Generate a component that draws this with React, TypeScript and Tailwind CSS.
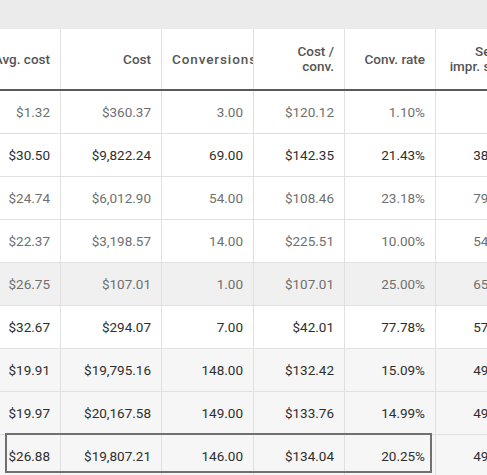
type Row = {
  avg: string;
  cost: string;
  conv: string;
  costConv: string;
  rate: string;
  share: string;
  strong?: boolean;
  shade?: 'none' | 'mid' | 'light';
};

const rows: Row[] = [
  { avg: '$1.32', cost: '$360.37', conv: '3.00', costConv: '$120.12', rate: '1.10%', share: '' },
  { avg: '$30.50', cost: '$9,822.24', conv: '69.00', costConv: '$142.35', rate: '21.43%', share: '38.27%', strong: true },
  { avg: '$24.74', cost: '$6,012.90', conv: '54.00', costConv: '$108.46', rate: '23.18%', share: '79.10%' },
  { avg: '$22.37', cost: '$3,198.57', conv: '14.00', costConv: '$225.51', rate: '10.00%', share: '54.62%' },
  { avg: '$26.75', cost: '$107.01', conv: '1.00', costConv: '$107.01', rate: '25.00%', share: '65.00%', shade: 'mid' },
  { avg: '$32.67', cost: '$294.07', conv: '7.00', costConv: '$42.01', rate: '77.78%', share: '57.14%', strong: true },
  { avg: '$19.91', cost: '$19,795.16', conv: '148.00', costConv: '$132.42', rate: '15.09%', share: '49.31%', strong: true, shade: 'light' },
  { avg: '$19.97', cost: '$20,167.58', conv: '149.00', costConv: '$133.76', rate: '14.99%', share: '49.05%', strong: true, shade: 'light' },
  { avg: '$26.88', cost: '$19,807.21', conv: '146.00', costConv: '$134.04', rate: '20.25%', share: '49.88%', strong: true, shade: 'light' },
];

const grid = 'grid grid-cols-[100px_101px_92px_91px_91px_91px]';

const HeadCell: React.FC<{ children: React.ReactNode; last?: boolean }> = ({ children, last }) => (
  <div
    className={`flex items-center justify-end overflow-hidden whitespace-nowrap pl-[10px] pr-[10px] text-right ${
      last ? '' : 'border-r border-[#e0e0e0]'
    }`}
  >
    <div>{children}</div>
  </div>
);

const Cell: React.FC<{ children: React.ReactNode; last?: boolean }> = ({ children, last }) => (
  <div
    className={`flex items-center justify-end whitespace-nowrap pr-[10px] ${
      last ? '' : 'border-r border-[#e0e0e0]'
    }`}
  >
    {children}
  </div>
);

const App: React.FC = () => {
  return (
    <div className="h-[475px] w-[487px] overflow-hidden bg-white font-['Roboto',sans-serif]">
      <div className="h-[29px] bg-[#ebebeb]" />
      <div className="-ml-[39px] w-[566px]">
        <div
          className={`${grid} h-[62px] border-b-2 border-[#5a5a5a] text-[13.5px] font-medium leading-[15px] text-[#555555]`}
        >
          <HeadCell>Avg. cost</HeadCell>
          <HeadCell>Cost</HeadCell>
          <div className="flex items-center overflow-hidden whitespace-nowrap border-r border-[#e0e0e0] pl-[10px] tracking-[0.9px]">
            Conversions
          </div>
          <HeadCell>
            Cost /
            <br />
            conv.
          </HeadCell>
          <HeadCell>Conv. rate</HeadCell>
          <HeadCell last>
            Search
            <br />
            impr. share
          </HeadCell>
        </div>
        {rows.map((r, i) => (
          <div
            key={i}
            className={`${grid} relative h-[43px] border-b border-[#e0e0e0] text-[13.5px] ${
              r.shade === 'mid' ? 'bg-[#f0f0f0]' : r.shade === 'light' ? 'bg-[#f6f6f6]' : 'bg-white'
            } ${r.strong ? 'text-[#2e2e2e]' : 'text-[#6f6f6f]'}`}
          >
            <Cell>{r.avg}</Cell>
            <Cell>{r.cost}</Cell>
            <Cell>{r.conv}</Cell>
            <Cell>{r.costConv}</Cell>
            <Cell>{r.rate}</Cell>
            <Cell last>{r.share}</Cell>
            {i === rows.length - 1 && (
              <div className="pointer-events-none absolute left-[44px] top-[-2px] h-[40px] w-[427px] border-2 border-[#707070]" />
            )}
          </div>
        ))}
      </div>
    </div>
  );
};

export default App;
